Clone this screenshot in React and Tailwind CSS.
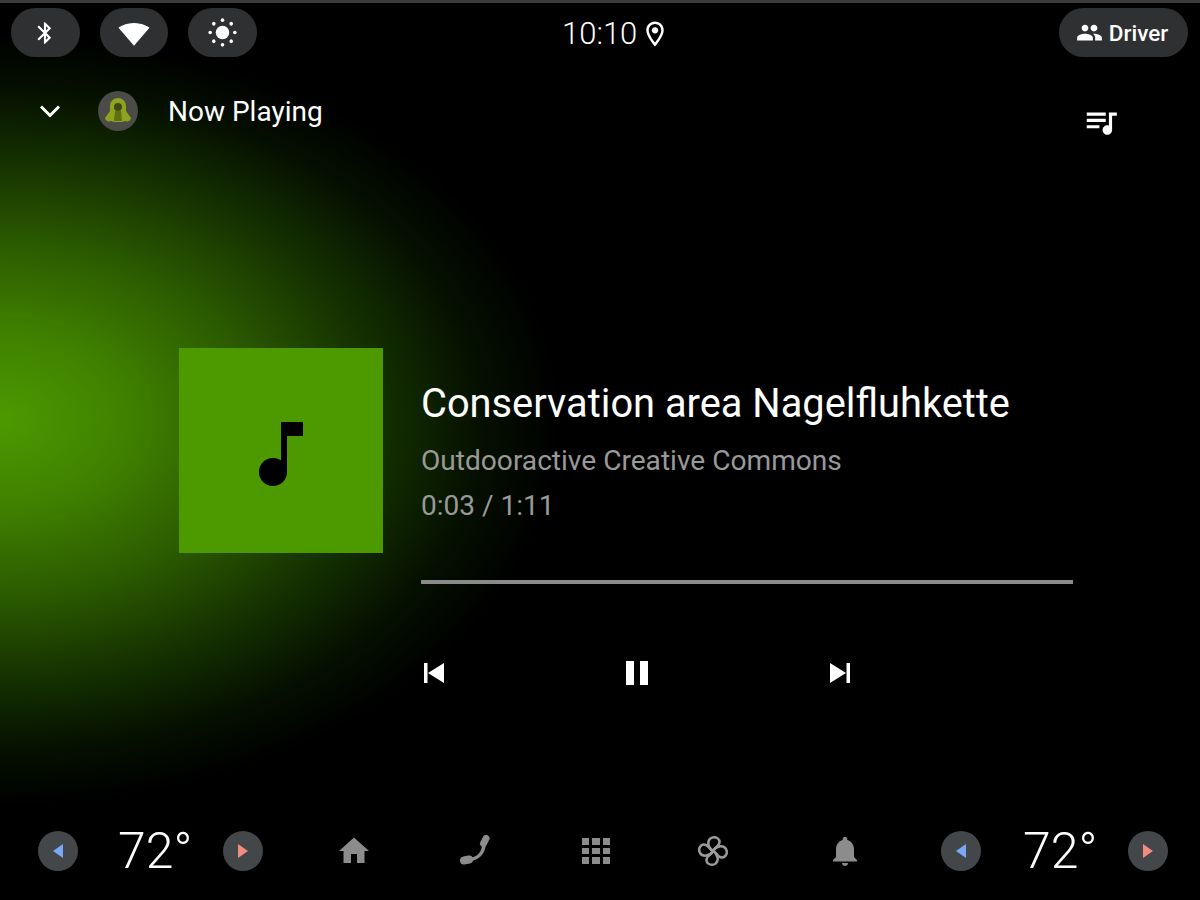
import React from "react";

const roboto = { fontFamily: "Roboto, sans-serif" };

function Icon({ className = "", d, children, viewBox = "0 0 24 24" }) {
  return (
    <svg viewBox={viewBox} fill="currentColor" className={className}>
      {d && <path d={d} />}
      {children}
    </svg>
  );
}

function Pill({ children, className = "w-[68.5px]" }) {
  return (
    <div className={`flex h-[49px] items-center justify-center rounded-full bg-[#2e3032] ${className}`}>
      {children}
    </div>
  );
}

function SunIcon({ className }) {
  const dots = [0, 45, 90, 135, 180, 225, 270, 315];
  return (
    <Icon className={className}>
      <circle cx="12" cy="12" r="5.6" />
      {dots.map((a) => (
        <circle key={a} cx="12" cy="1.8" r="1.5" transform={`rotate(${a} 12 12)`} />
      ))}
    </Icon>
  );
}

function FanIcon({ className }) {
  const petals = [0, 90, 180, 270];
  return (
    <svg viewBox="0 0 32 32" className={className} fill="none" stroke="currentColor" strokeWidth="2.5" strokeLinejoin="round">
      {petals.map((a) => (
        <path key={a} d="M16 16C11 13 9.5 6 14 3c5-2.5 10 1.5 8 6-1 2.5-4.5 3.5-6 7z" transform={`rotate(${a} 16 16)`} />
      ))}
    </svg>
  );
}

function Temp({ className = "", gap = "ml-10" }) {
  return (
    <div className={`flex items-center ${className}`}>
      <div className="flex h-10 w-10 items-center justify-center rounded-full bg-[#44474a]">
        <svg viewBox="0 0 12 14" className="h-[14px] w-[12px] text-[#7aa8f5]" fill="currentColor">
          <path d="M11 0v14L1 7z" />
        </svg>
      </div>
      <div className={`${gap} w-[105px] text-[50px] leading-none font-light text-white`}>72°</div>
      <div className="flex h-10 w-10 items-center justify-center rounded-full bg-[#44474a]">
        <svg viewBox="0 0 12 14" className="h-[14px] w-[12px] text-[#f28b82]" fill="currentColor">
          <path d="M1 0v14l10-7z" />
        </svg>
      </div>
    </div>
  );
}

export default function App() {
  return (
    <div
      style={roboto}
      className="flex h-[900px] w-[1200px] flex-col overflow-hidden bg-black bg-[radial-gradient(ellipse_560px_385px_at_0px_420px,#4c9a00_0%,#408200_22%,#2c5c00_45%,#143000_68%,#051000_86%,#000000_100%)] text-white"
    >
      <div className="h-[3px] bg-[#3c3c3c]" />

      {/* status bar */}
      <div className="mt-[5px] flex h-[49px] items-center pl-[11px] pr-3">
        <div className="flex w-[551px] gap-5">
          <Pill>
            <Icon className="h-[26px] w-[26px]" d="M17.71 7.71L12 2h-1v7.59L6.41 5 5 6.41 10.59 12 5 17.59 6.41 19 11 14.41V22h1l5.71-5.71-4.3-4.29 4.3-4.29zM13 5.83l1.88 1.88L13 9.59V5.83zm1.88 10.46L13 18.17v-3.76l1.88 1.88z" />
          </Pill>
          <Pill>
            <Icon className="h-[32px] w-[32px]" d="M12 21.5 L23.6 8 C23.1 7.6 18.6 4.5 12 4.5 5.4 4.5 .9 7.6 .4 8z" />
          </Pill>
          <Pill>
            <SunIcon className="h-[29px] w-[29px]" />
          </Pill>
        </div>
        <div className="mt-[2px] flex items-center">
          <span className="text-[31px] leading-none font-light">10:10</span>
          <Icon className="ml-[3px] h-[30px] w-[30px]" d="M12 2C8.13 2 5 5.13 5 9c0 5.25 7 13 7 13s7-7.75 7-13c0-3.87-3.13-7-7-7zM7 9c0-2.76 2.24-5 5-5s5 2.24 5 5c0 2.88-2.88 7.19-5 9.88C9.92 16.21 7 11.85 7 9z">
            <circle cx="12" cy="9" r="2.5" />
          </Icon>
        </div>
        <div className="ml-auto">
          <Pill className="w-[129px] gap-[6px] pr-[3px]">
            <Icon className="h-[27px] w-[27px]" d="M16 11c1.66 0 2.99-1.34 2.99-3S17.66 5 16 5c-1.66 0-3 1.34-3 3s1.34 3 3 3zm-8 0c1.66 0 2.99-1.34 2.99-3S9.66 5 8 5C6.34 5 5 6.34 5 8s1.34 3 3 3zm0 2c-2.33 0-7 1.17-7 3.5V19h14v-2.5c0-2.33-4.67-3.5-7-3.5zm8 0c-.29 0-.62.02-.97.05 1.16.84 1.97 1.97 1.97 3.45V19h6v-2.5c0-2.33-4.67-3.5-7-3.5z" />
            <span className="mt-[2px] text-[22.5px] leading-none font-medium">Driver</span>
          </Pill>
        </div>
      </div>

      {/* now playing header */}
      <div className="mt-[34px] flex h-10 items-center pl-[38px] pr-[80px]">
        <svg viewBox="0 0 24 14" className="h-[14px] w-[24px]" fill="none" stroke="currentColor" strokeWidth="3">
          <path d="M3 2.5l9 9 9-9" />
        </svg>
        <div className="ml-[36px] flex h-10 w-10 items-center justify-center rounded-full bg-[#4b4b47]">
          <svg viewBox="0 0 32 32" className="h-8 w-8" fill="#8fa31e">
            <path d="M16 3c-5 0-8 4-8 8v5l-5 7c0 3 4 4 6 3l3 1h8l3-1c2 1 6 0 6-3l-5-7v-5c0-4-3-8-8-8z" />
            <circle cx="16" cy="12" r="4" fill="#3e4a14" />
            <path d="M13 16h6l1 10h-8z" fill="#5f7012" />
          </svg>
        </div>
        <div className="mt-[2px] ml-[30px] text-[28px] leading-none">Now Playing</div>
        <Icon className="mt-[21px] ml-auto h-[38px] w-[38px]" d="M15 6H3v2h12V6zm0 4H3v2h12v-2zM3 16h8v-2H3v2zM17 6v8.18c-.31-.11-.65-.18-1-.18-1.66 0-3 1.34-3 3s1.34 3 3 3 3-1.34 3-3V8h3V6h-5z" />
      </div>

      {/* media */}
      <div className="mt-[217px] flex items-start pl-[179px]">
        <div className="flex h-[205px] w-[204px] items-center justify-center bg-[#4c9900] pt-[7px]">
          <svg viewBox="0 0 44 64" className="h-[64px] w-[44px]" fill="#000">
            <circle cx="14" cy="50" r="14" />
            <path d="M22 0h22v14H28v36h-6z" />
          </svg>
        </div>
        <div className="ml-[38px] w-[652px] pt-[33px]">
          <div className="text-[39.8px] leading-[46px] whitespace-nowrap">Conservation area Nagelfluhkette</div>
          <div className="mt-[17px] text-[28.1px] leading-[34px] text-[#999999]">Outdooractive Creative Commons</div>
          <div className="mt-[11px] text-[28px] leading-[34px] text-[#999999]">0:03 / 1:11</div>
          <div className="mt-[57px] h-[4px] bg-[#8a8a8a]" />
          <div className="mt-[77px] flex items-center">
            <svg viewBox="0 0 20 20" className="ml-[3px] h-[20px] w-[20px]" fill="currentColor">
              <path d="M0 0h3.5v20H0zM20 0v20L4 10z" />
            </svg>
            <div className="ml-[182px] flex h-[24px] gap-[6px]">
              <div className="w-[8px] bg-white" />
              <div className="w-[8px] bg-white" />
            </div>
            <svg viewBox="0 0 20 20" className="ml-[182px] h-[20px] w-[20px]" fill="currentColor">
              <path d="M16.5 0H20v20h-3.5zM0 0v20l16-10z" />
            </svg>
          </div>
        </div>
      </div>

      {/* bottom bar */}
      <div className="mt-auto mb-[29px] flex h-10 items-center pl-[38px] pr-[32px]">
        <Temp />
        <Icon className="ml-[73px] h-[36px] w-[36px] text-[#8c8c8c]" d="M10 20v-6h4v6h5v-8h3L12 3 2 12h3v8z" />
        <svg viewBox="0 0 32 32" className="ml-[88px] h-[32px] w-[32px] text-[#8c8c8c]" fill="none" stroke="currentColor" strokeLinecap="round">
          <path d="M24 8C24 18 18 24 8 25" strokeWidth="3.6" />
          <path d="M26 3.5L23.5 8.5" strokeWidth="7" />
          <path d="M4 25.5L9 24.5" strokeWidth="8" />
        </svg>
        <div className="ml-[90px] grid h-[26px] w-[28px] grid-cols-3 gap-[3px]">
          {[0, 1, 2, 3, 4, 5, 6, 7, 8].map((i) => (
            <div key={i} className="bg-[#8c8c8c]" />
          ))}
        </div>
        <FanIcon className="ml-[87px] h-[32px] w-[32px] text-[#9a9a9a]" />
        <Icon className="ml-[98px] h-[36px] w-[36px] text-[#8c8c8c]" d="M12 22c1.1 0 2-.9 2-2h-4c0 1.1.89 2 2 2zm6-6v-5c0-3.07-1.64-5.64-4.5-6.32V4c0-.83-.67-1.5-1.5-1.5s-1.5.67-1.5 1.5v.68C7.63 5.36 6 7.92 6 11v5l-2 2v1h16v-1l-2-2z" />
        <Temp className="ml-auto" gap="ml-[42px]" />
      </div>
    </div>
  );
}
